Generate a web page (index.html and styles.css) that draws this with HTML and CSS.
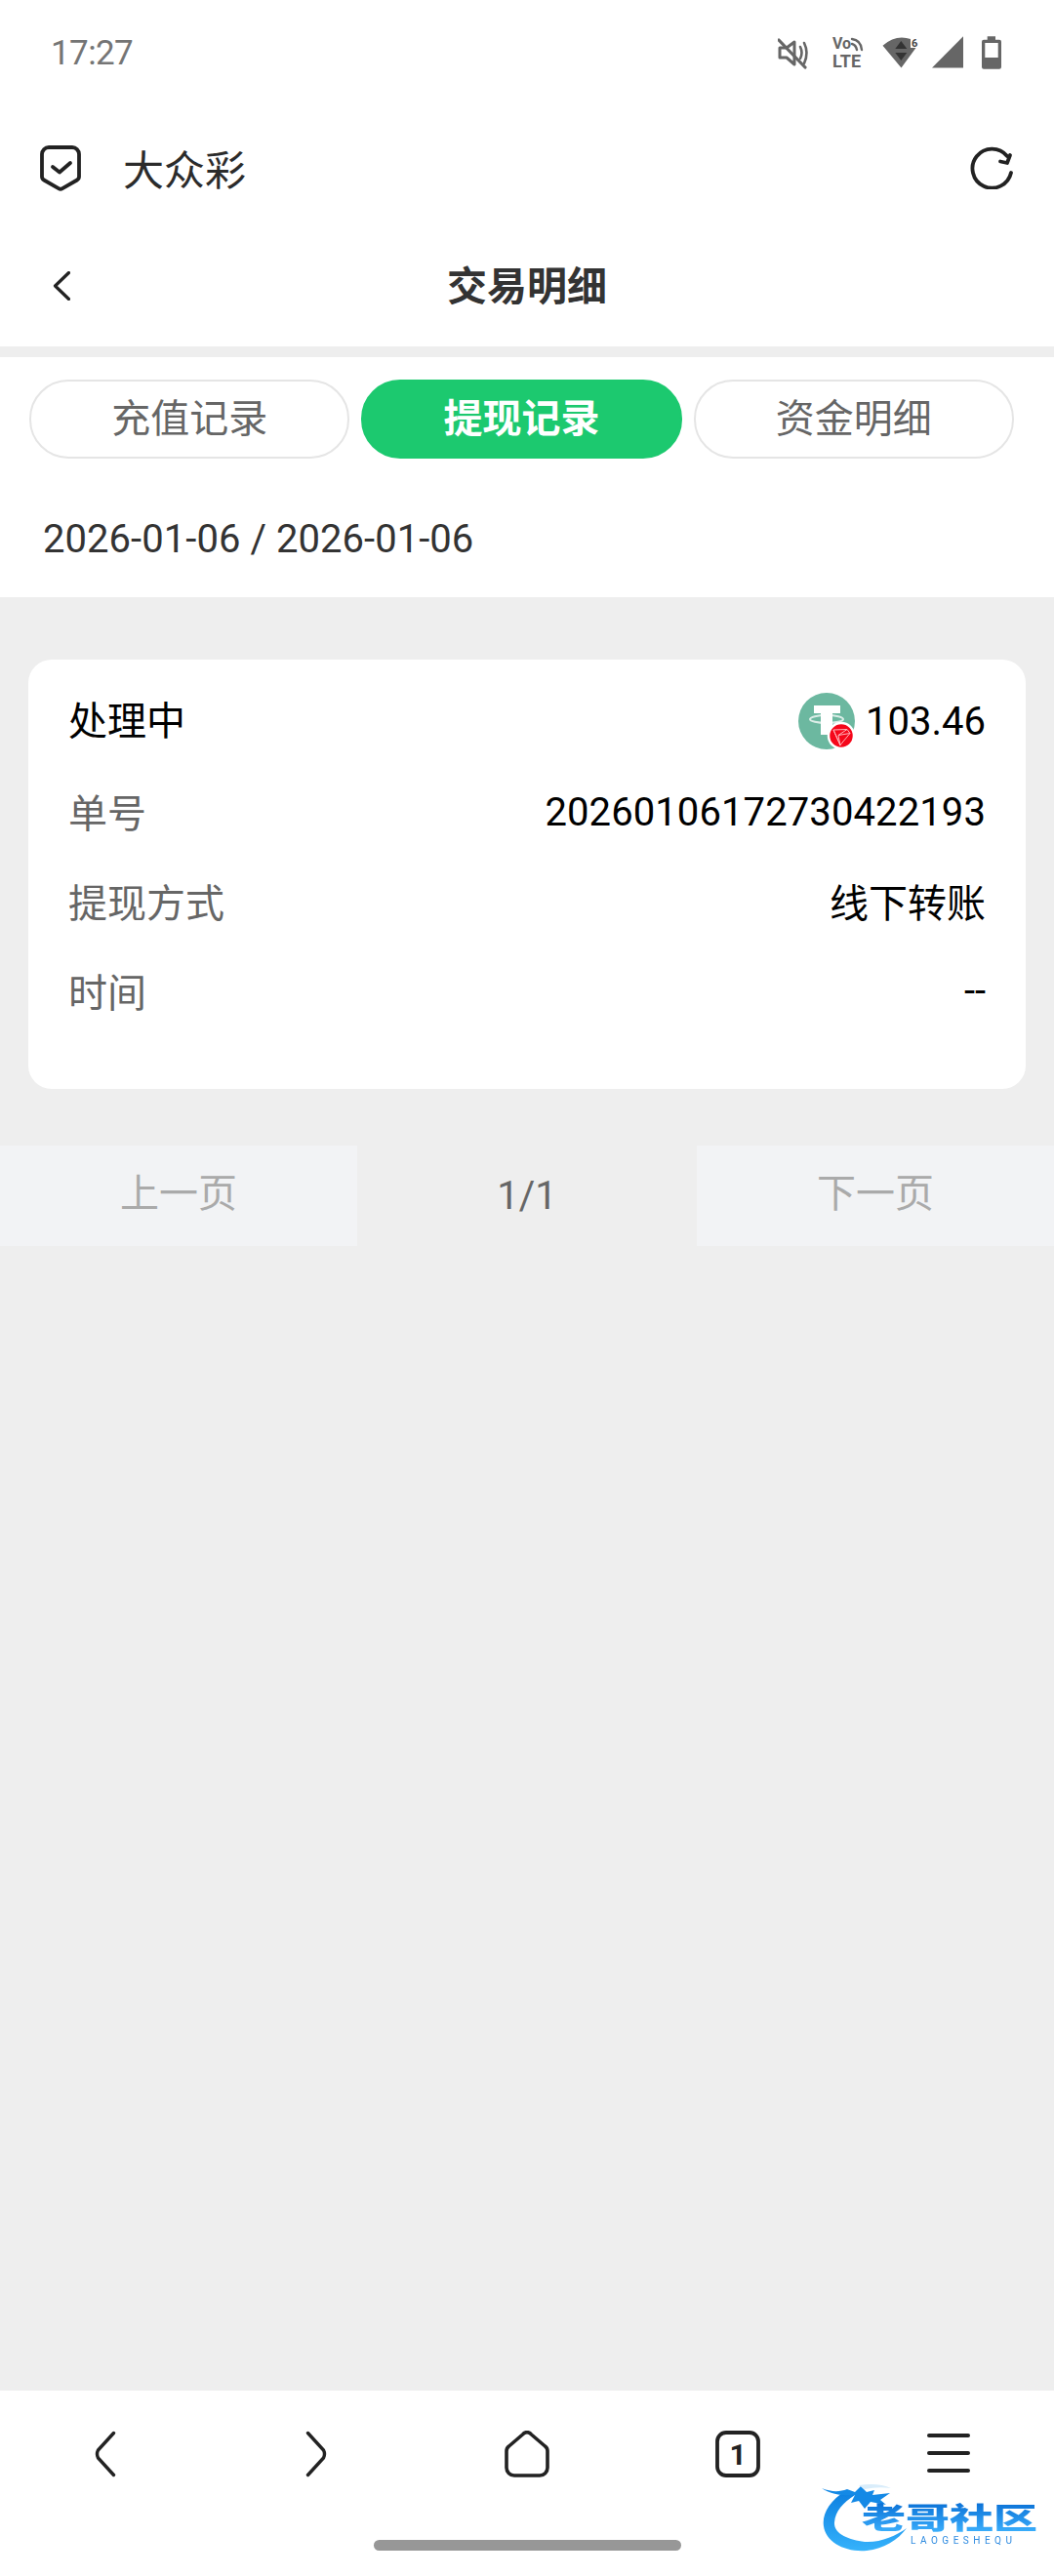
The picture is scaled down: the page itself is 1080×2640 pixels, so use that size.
FILE: index.html
```html
<!DOCTYPE html>
<html lang="zh-CN">
<head>
    <meta charset="UTF-8">
    <meta name="viewport" content="width=device-width, initial-scale=1.0">
    <title>交易明细</title>
    <link rel="stylesheet" href="styles.css">
</head>
<body>

    <!-- Phone status bar -->
    <div class="status-bar">
        <span class="clock">17:27</span>
        <svg class="status-icons" width="229" height="50" viewBox="0 -8 229 50">
            <path d="M2 12v10h7l8 7V6l-8 6z" fill="none" stroke="#666" stroke-width="3" stroke-linejoin="round"/>
            <path d="M23 11q3 6 0 12M27 7q5 10 0 21" fill="none" stroke="#666" stroke-width="2.600" stroke-linecap="round"/>
            <path d="M1 4l27 28" stroke="#666" stroke-width="3.200" stroke-linecap="round"/>
            <text class="volte vo" x="56" y="13">Vo</text>
            <text class="volte lte" x="56" y="32">LTE</text>
            <path d="M76 3q9 1 10 11M76 8q4 1 5 6" fill="none" stroke="#666" stroke-width="2.400" stroke-linecap="round"/>
            <path d="M126.5 32.5L107.5 9.7Q117 1.5 127 1.5Q132 1.5 136 3V12H141.5z" fill="#666"/>
            <path d="M126.3 5l6 8h-12zM126.3 25l-6-8h12z" fill="#333"/>
            <text class="volte six" x="137" y="11">6</text>
            <path d="M158 32.5L190 .3V32.5z" fill="#666"/>
            <path fill-rule="evenodd" d="M214.7.3H223V3.7H227a2 2 0 0 1 2 2V31.7a2 2 0 0 1-2 2H211a2 2 0 0 1-2-2V5.7a2 2 0 0 1 2-2h3.7zM212.3 7V22H225.7V7z" fill="#666"/>
        </svg>
    </div>

    <!-- Browser header -->
    <div class="app-bar">
        <svg class="shield" width="42" height="47" viewBox="0 0 42 47">
            <path d="M9 2h24a7 7 0 0 1 7 7v23a4 4 0 0 1-2 3.500l-15 8.700a4 4 0 0 1-4 0l-15-8.700a4 4 0 0 1-2-3.500V9a7 7 0 0 1 7-7z" fill="none" stroke="#222" stroke-width="3.800"/>
            <path d="M13 22l7 5.500 11-9.500" fill="none" stroke="#222" stroke-width="3.800" stroke-linecap="round" stroke-linejoin="round"/>
        </svg>
        <span class="site-name">大众彩</span>
        <svg class="refresh" width="44" height="44" viewBox="0 0 44 44">
            <path d="M42 27A20 20 0 1 1 38 10" fill="none" stroke="#222" stroke-width="3.800" stroke-linecap="round"/>
            <path d="M31 15.500l7 1.500 3-8" fill="none" stroke="#222" stroke-width="3.800" stroke-linecap="round" stroke-linejoin="round"/>
        </svg>
    </div>

    <!-- Page title -->
    <div class="nav-bar">
        <svg class="back" width="18" height="30" viewBox="0 0 18 30">
            <path d="M16.500 1.500L2.500 15l14 13.500" fill="none" stroke="#222" stroke-width="3.200" stroke-linecap="round" stroke-linejoin="round"/>
        </svg>
        <h1>交易明细</h1>
    </div>

    <div class="filters">
        <div class="tabs">
            <div class="tab">充值记录</div>
            <div class="tab active">提现记录</div>
            <div class="tab">资金明细</div>
        </div>
        <div class="date-range">2026-01-06 / 2026-01-06</div>
    </div>

    <div class="content">
        <div class="record">
            <div class="row">
                <span class="status">处理中</span>
                <span class="amount">
                    <svg class="coin" width="58" height="58" viewBox="0 0 58 58">
                        <circle cx="29" cy="29" r="29" fill="#6cb8a0"/>
                        <path d="M16 13h27v8H35v22H23V21h-7z" fill="#fff"/>
                        <ellipse cx="29" cy="27" rx="17" ry="4" fill="none" stroke="#fff" stroke-opacity=".75" stroke-width="2"/>
                        <circle cx="44" cy="44" r="13" fill="#f5071a" stroke="#fff" stroke-width="2.500"/>
                        <path d="M36 38l14-.5 3 4-10 12zM36 38l7 16M50 37.500l-9 6 12-2M41 43.500l2 10.500" fill="none" stroke="#ffb3b8" stroke-width="1"/>
                    </svg>
                    103.46
                </span>
            </div>
            <div class="row">
                <span class="label">单号</span>
                <span class="order-no">20260106172730422193</span>
            </div>
            <div class="row">
                <span class="label">提现方式</span>
                <span>线下转账</span>
            </div>
            <div class="row">
                <span class="label">时间</span>
                <span>--</span>
            </div>
        </div>

        <div class="pager">
            <div class="page-btn">上一页</div>
            <div class="page-num">1/1</div>
            <div class="page-btn">下一页</div>
        </div>
    </div>

    <!-- Browser toolbar -->
    <div class="toolbar">
        <div class="tool-icons">
            <svg width="22" height="48" viewBox="0 0 22 48">
                <path d="M19.500 2.500L3.500 20Q1.500 24 3.500 28L19.500 45.500" fill="none" stroke="#222" stroke-width="3.400" stroke-linecap="round"/>
            </svg>
            <svg width="22" height="48" viewBox="0 0 22 48">
                <path d="M2.500 2.500L18.500 20Q20.500 24 18.500 28L2.500 45.500" fill="none" stroke="#222" stroke-width="3.400" stroke-linecap="round"/>
            </svg>
            <svg width="46" height="48" viewBox="0 0 46 48">
                <path d="M18.500 4a5.500 5.500 0 0 1 9 0L41.500 16a6 6 0 0 1 2.500 5V38a8 8 0 0 1-8 8H10a8 8 0 0 1-8-8V21a6 6 0 0 1 2.500-5z" fill="none" stroke="#222" stroke-width="3.600" stroke-linejoin="round"/>
            </svg>
            <svg width="46" height="48" viewBox="0 0 46 48">
                <rect x="2" y="2" width="42" height="44" rx="9" fill="none" stroke="#222" stroke-width="3.800"/>
                <text class="tab-count" x="23" y="35">1</text>
            </svg>
            <div class="menu-icon"><i></i><i></i><i></i></div>
        </div>
        <div class="home-bar"></div>

        <!-- Community badge over the corner of the toolbar -->
        <div class="badge">
            <svg class="dragon" width="96" height="70" viewBox="0 0 96 70">
                <defs>
                    <linearGradient id="dragonFill" x1="0" y1="0" x2="0" y2="1">
                        <stop offset="0" stop-color="#0d7fe0"/>
                        <stop offset="1" stop-color="#35b2fb"/>
                    </linearGradient>
                </defs>
                <path d="M26 8C10 18 2 32 4 44C6 60 26 71 48 69C66 67 80 58 89 46C78 54 62 61 46 60C30 58 14 52 15 40C16 28 24 20 36 12z" fill="url(#dragonFill)"/>
                <path d="M2 5C12 9 20 9 28 6L36 9L42 3L48 9L56 7L54 12L72 10L62 17L68 22L52 19L46 26L40 18L32 20L36 12C26 13 12 12 2 5z" fill="#1489e6"/>
                <path d="M40 2Q60 -1 73 5Q60 3 46 6z" fill="#d9edfb"/>
            </svg>
            <span class="badge-name">老哥社区</span>
            <span class="badge-pinyin">LAOGESHEQU</span>
        </div>
    </div>

</body>
</html>
```

FILE: styles.css
```css
body {
    margin: 0;
    width: 1080px;
    height: 2640px;
    display: flex;
    flex-direction: column;
    background-color: #fff;
    font-family: Roboto, "Noto Sans CJK SC", sans-serif;
    font-size: 40px;
    color: #000;
    overflow: hidden;
}

svg {
    display: block;
    flex-shrink: 0;
}

/* Status bar */
.status-bar {
    height: 108px;
    padding: 0 54px 0 52px;
    display: flex;
    align-items: center;
    justify-content: space-between;
}

.clock {
    font-size: 35px;
    letter-spacing: -0.6px;
    color: #757575;
}

.volte {
    font-family: Roboto, sans-serif;
    font-weight: 700;
    fill: #666;
}

.vo { font-size: 16px; }
.lte { font-size: 18px; }
.six { font-size: 11px; fill: #444; }

/* Header rows */
.app-bar {
    height: 128px;
    padding: 0 42px 0 41px;
    display: flex;
    align-items: center;
}

.site-name {
    margin-left: 43px;
    padding-bottom: 2px;
    font-size: 42px;
    color: #2b2b2b;
}

.refresh {
    margin-left: auto;
}

.nav-bar {
    height: 113px;
    padding: 0 0 6px 54px;
    display: flex;
    align-items: center;
    position: relative;
}

.nav-bar h1 {
    margin: 0;
    padding-bottom: 5px;
    position: absolute;
    left: 0;
    right: 0;
    text-align: center;
    font-size: 41px;
    font-weight: 700;
    color: #333;
}

/* Tabs and date */
.filters {
    border-top: 11px solid #eee;
}

.tabs {
    padding: 23px 41px 0 30px;
    display: flex;
    gap: 12px;
}

.tab {
    flex: 1;
    height: 81px;
    box-sizing: border-box;
    padding-bottom: 8px;
    border: 2px solid #e5e5e5;
    border-radius: 40px;
    display: flex;
    align-items: center;
    justify-content: center;
    color: #666;
}

.tab.active {
    background-color: #1cc96f;
    border-color: #1cc96f;
    color: #fff;
    font-weight: 700;
}

.date-range {
    height: 142px;
    box-sizing: border-box;
    padding: 22px 0 0 44px;
    display: flex;
    align-items: center;
    letter-spacing: 0.05px;
    color: #333;
}

/* Record card */
.content {
    flex: 1;
    background-color: #eee;
    padding-top: 64px;
}

.record {
    margin: 0 29px;
    padding: 17px 41px 55px;
    background-color: #fff;
    border-radius: 24px;
}

.row {
    height: 92px;
    display: flex;
    align-items: center;
    justify-content: space-between;
}

.status {
    padding-bottom: 6px;
}

.label {
    color: #666;
}

.order-no {
    padding-top: 2px;
    letter-spacing: 0.1px;
}

.amount {
    display: flex;
    align-items: center;
    gap: 11px;
}

/* Pager */
.pager {
    margin-top: 58px;
    height: 103px;
    display: grid;
    grid-template-columns: 366px 1fr 366px;
    align-items: center;
    text-align: center;
}

.page-btn {
    height: 103px;
    line-height: 100px;
    background-color: #f2f3f5;
    color: #aaa;
}

.page-num {
    color: #666;
}

/* Toolbar */
.toolbar {
    height: 190px;
    position: relative;
    display: flex;
    flex-direction: column;
    align-items: center;
}

.tool-icons {
    width: 100%;
    padding-top: 41px;
    display: grid;
    grid-template-columns: repeat(5, 216px);
    justify-items: center;
}

.tab-count {
    font-family: Roboto, sans-serif;
    font-size: 30px;
    font-weight: 700;
    fill: #222;
    text-anchor: middle;
}

.menu-icon {
    width: 44px;
    height: 48px;
    padding-top: 3px;
    box-sizing: border-box;
    display: flex;
    flex-direction: column;
    gap: 14px;
}

.menu-icon i {
    height: 4px;
    background-color: #222;
    border-radius: 2px;
}

.home-bar {
    width: 315px;
    height: 11px;
    margin-top: 64px;
    background-color: #979797;
    border-radius: 6px;
}

/* Community badge */
.badge {
    position: absolute;
    left: 840px;
    top: 95px;
    width: 230px;
    height: 72px;
    filter: blur(0.6px);
}

.dragon {
    position: absolute;
    left: 0;
    top: 0;
}

.badge-name {
    position: absolute;
    left: 43px;
    top: 10px;
    font-size: 45px;
    line-height: 52px;
    font-weight: 900;
    white-space: nowrap;
    transform: scaleY(0.66);
    background: linear-gradient(#0a6fd6, #3fb5ff);
    -webkit-background-clip: text;
    background-clip: text;
    color: transparent;
}

.badge-pinyin {
    position: absolute;
    left: 93px;
    top: 54px;
    font-size: 10px;
    line-height: 10px;
    letter-spacing: 4.500px;
    color: #2f8be0;
    white-space: nowrap;
}
```
